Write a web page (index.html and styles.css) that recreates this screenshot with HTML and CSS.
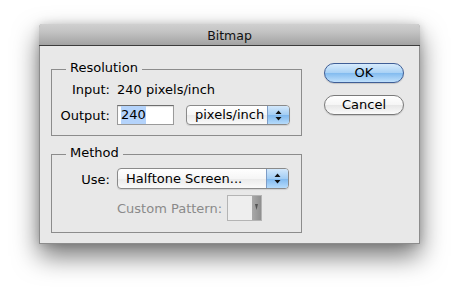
FILE: index.html
```html
<!DOCTYPE html>
<html lang="en">
<head>
    <meta charset="UTF-8">
    <title>Bitmap</title>
    <link rel="stylesheet" href="styles.css">
</head>
<body>
    <div class="window">
        <div class="titlebar">Bitmap</div>
        <div class="content">
            <div class="groups">
                <div class="group">
                    <div class="group-title">Resolution</div>
                    <div class="form-grid resolution">
                        <span class="label">Input:</span>
                        <span class="value">240 pixels/inch</span>
                        <span class="label tall">Output:</span>
                        <div class="field-row">
                            <div class="text-field"><span class="selected">240</span></div>
                            <div class="popup units">
                                <span class="popup-text">pixels/inch</span>
                                <span class="stepper">
                                    <svg width="7" height="11" viewBox="0 0 7 11"><path d="M3.5 0.5 L6.5 4 L0.5 4 Z M0.5 7 L6.5 7 L3.5 10.5 Z" fill="#111"/></svg>
                                </span>
                            </div>
                        </div>
                    </div>
                </div>

                <div class="group method">
                    <div class="group-title">Method</div>
                    <div class="form-grid methods">
                        <span class="label use">Use:</span>
                        <div class="popup wide">
                            <span class="popup-text">Halftone Screen...</span>
                            <span class="stepper">
                                <svg width="7" height="11" viewBox="0 0 7 11"><path d="M3.5 0.5 L6.5 4 L0.5 4 Z M0.5 7 L6.5 7 L3.5 10.5 Z" fill="#111"/></svg>
                            </span>
                        </div>
                        <span></span>
                        <div class="pattern-row">
                            <span class="disabled">Custom Pattern:</span>
                            <div class="swatch">
                                <span class="swatch-arrow">
                                    <svg width="3" height="6" viewBox="0 0 3 6"><path d="M0 0 L3 0 L1.5 6 Z" fill="#555"/></svg>
                                </span>
                            </div>
                        </div>
                    </div>
                </div>
            </div>

            <div class="buttons">
                <button class="btn default">OK</button>
                <button class="btn">Cancel</button>
            </div>
        </div>
    </div>
</body>
</html>
```

FILE: styles.css
```css
html {
    background-color: #fff;
}
body {
    margin: 0;
    min-height: 298px;
    box-sizing: border-box;
    padding: 24px 0 0 39px;
    font-family: "DejaVu Sans", sans-serif;
    font-size: 13px;
    color: #000;
}
.window {
    width: 381px;
    box-sizing: border-box;
    background-color: #e8e8e8;
    border: 1px solid #8c8c8c;
    border-top: none;
    border-radius: 4px 4px 0 0;
    box-shadow: 0 12px 26px rgba(0,0,0,0.55), 0 0 8px rgba(0,0,0,0.15);
}
.titlebar {
    height: 18px;
    padding-top: 3px;
    line-height: 18px;
    text-align: center;
    font-size: 12.5px;
    color: #111;
    border-radius: 4px 4px 0 0;
    background: linear-gradient(#d0d0d0, #c2c2c2 40%, #a2a2a2);
    border-bottom: 1px solid #3c3c3c;
    margin: 0 -1px;
}
.content {
    display: flex;
    align-items: flex-start;
    padding: 17px 15px 10px 11px;
}
.groups {
    width: 251px;
    padding-top: 6px;
}
.group {
    border: 1px solid #8c8c8c;
    padding: 0 12px 10px 0;
}
.group.method {
    margin-top: 18px;
    padding-bottom: 11px;
}
.group-title {
    width: fit-content;
    margin: -10px 0 0 14px;
    padding: 0 4px;
    line-height: 16px;
    background-color: #e8e8e8;
}
.form-grid {
    display: grid;
    grid-template-columns: 58px 1fr;
    column-gap: 7px;
    line-height: 16px;
}
.resolution {
    margin-top: 6px;
    grid-template-rows: 16px 20px;
    row-gap: 7px;
}
.methods {
    margin-top: 7px;
    grid-template-rows: 21px 26px;
    row-gap: 6px;
}
.label {
    text-align: right;
}
.label.tall {
    line-height: 20px;
    padding-top: 1px;
}
.label.use {
    line-height: 21px;
    padding-top: 1px;
}
.field-row {
    display: flex;
    align-items: center;
}
.text-field {
    width: 57px;
    height: 20px;
    box-sizing: border-box;
    padding: 0 0 0 3px;
    background-color: #fff;
    border: 1px solid #9a9a9a;
    border-top-color: #6e6e6e;
    box-shadow: inset 0 1px 1px rgba(0,0,0,0.12);
    line-height: 18px;
}
.selected {
    display: inline-block;
    background-color: #b4d3fb;
    line-height: 18px;
}
.popup {
    display: flex;
    box-sizing: border-box;
    border: 1px solid #8a8a8a;
    border-radius: 4px;
    overflow: hidden;
    background: linear-gradient(#ffffff, #f6f6f6 50%, #eaeaea 51%, #fafafa);
    box-shadow: 0 1px 1px rgba(0,0,0,0.1);
}
.popup-text {
    flex: 1;
    padding-left: 8px;
}
.units {
    width: 104px;
    height: 20px;
    margin-left: 12px;
    line-height: 18px;
}
.wide {
    width: 172px;
    height: 21px;
    line-height: 20px;
}
.stepper {
    width: 21px;
    display: flex;
    align-items: center;
    justify-content: center;
    border-left: 1px solid #7d9cc6;
    background: linear-gradient(#d3e8fb, #a2cdf4 50%, #7fb8ee 51%, #b6dbfb);
}
.pattern-row {
    display: flex;
    align-items: center;
}
.disabled {
    color: #8a8a8a;
    line-height: 26px;
    padding-top: 1px;
}
.swatch {
    display: flex;
    justify-content: flex-end;
    width: 35px;
    height: 26px;
    box-sizing: border-box;
    margin-left: 5px;
    border: 1px solid #b4b4b4;
    background-color: #eeeeee;
}
.swatch-arrow {
    width: 9px;
    display: flex;
    justify-content: center;
    padding-top: 8px;
    box-sizing: border-box;
    background: linear-gradient(to right, #a9a9a9, #8f8f8f);
}
.buttons {
    display: flex;
    flex-direction: column;
    gap: 12px;
    margin-left: 22px;
}
.btn {
    width: 80px;
    height: 20px;
    padding: 0;
    font-family: "DejaVu Sans", sans-serif;
    font-size: 13px;
    color: #000;
    line-height: 18px;
    border-radius: 10px;
    border: 1px solid #7a7a7a;
    background: linear-gradient(#ffffff, #f5f5f5 50%, #e6e6e6 51%, #fbfbfb);
    box-shadow: 0 1px 1px rgba(0,0,0,0.15);
}
.btn.default {
    border-color: #3f5e96;
    background: linear-gradient(#d7ebfc, #a8d1f5 50%, #82bbef 51%, #bfe0fc);
}
```
